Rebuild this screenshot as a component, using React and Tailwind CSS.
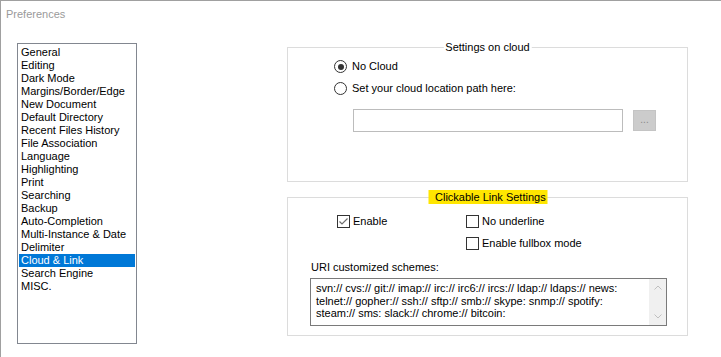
const pages = [
  'General',
  'Editing',
  'Dark Mode',
  'Margins/Border/Edge',
  'New Document',
  'Default Directory',
  'Recent Files History',
  'File Association',
  'Language',
  'Highlighting',
  'Print',
  'Searching',
  'Backup',
  'Auto-Completion',
  'Multi-Instance & Date',
  'Delimiter',
  'Cloud & Link',
  'Search Engine',
  'MISC.',
];

const schemes = [
  'svn:// cvs:// git:// imap:// irc:// irc6:// ircs:// ldap:// ldaps:// news:',
  'telnet:// gopher:// ssh:// sftp:// smb:// skype: snmp:// spotify:',
  'steam:// sms: slack:// chrome:// bitcoin:',
];

function Radio({ checked, label, className = '' }) {
  return (
    <div className={`flex items-center h-[13px] ${className}`}>
      <div className="w-[13px] h-[13px] rounded-full border border-[#333] flex items-center justify-center bg-white">
        {checked && <div className="w-[6px] h-[6px] rounded-full bg-[#333]" />}
      </div>
      <span className="ml-[5px] leading-[13px]">{label}</span>
    </div>
  );
}

function Check({ checked, label, className = '' }) {
  return (
    <div className={`flex items-center h-[13px] ${className}`}>
      <div className="w-[13px] h-[13px] border border-[#333] bg-white flex items-center justify-center">
        {checked && (
          <svg width="11" height="11" viewBox="0 0 11 11">
            <path d="M1.5 5.5 L4 8 L9.5 2.5" fill="none" stroke="#6e6e6e" strokeWidth="1.2" />
          </svg>
        )}
      </div>
      <span className="ml-[3px] leading-[13px]">{label}</span>
    </div>
  );
}

function Group({ title, titleClass = '', className = '', children }) {
  return (
    <div className={`relative w-[401px] border border-[#dcdcdc] ${className}`}>
      <span
        className={`absolute top-[-8px] left-1/2 -translate-x-1/2 h-[14px] leading-[14px] whitespace-nowrap ${titleClass}`}
      >
        {title}
      </span>
      {children}
    </div>
  );
}

export default function App() {
  return (
    <div className="w-[721px] h-[357px] bg-white border-t border-l border-[#a0a0a0] overflow-hidden font-['Liberation_Sans',Arial,sans-serif] text-[11px] text-black">
      <div className="h-[42px] pl-[5px] pt-[7px] leading-[13px] text-[#9a9a9a]">Preferences</div>

      <div className="flex pl-[16px]">
        <div className="w-[120px] h-[301px] border border-[#828790] px-[1px] pt-[2px]">
          {pages.map((p) => (
            <div
              key={p}
              className={`h-[13px] leading-[13px] pl-[2px] whitespace-nowrap ${
                p === 'Cloud & Link' ? 'bg-[#0078d7] text-white' : ''
              }`}
            >
              {p}
            </div>
          ))}
        </div>

        <div className="ml-[150px] mt-[4px] flex flex-col">
          <Group title="Settings on cloud" titleClass="bg-white px-[2px]" className="h-[135px]">
            <div className="pt-[12px] pl-[46px]">
              <Radio checked label="No Cloud" />
              <Radio label="Set your cloud location path here:" className="mt-[9px]" />
              <div className="flex mt-[14px] ml-[19px]">
                <div className="w-[270px] h-[23px] border border-[#bcbcbc] bg-white" />
                <div className="ml-[10px] mt-[1px] w-[23px] h-[21px] bg-[#cccccc] border border-[#c4c4c4] flex items-center justify-center text-[#8a8a8a] text-[10px] leading-none pb-[2px]">
                  ...
                </div>
              </div>
            </div>
          </Group>

          <Group
            title="Clickable Link Settings"
            titleClass="bg-[#ffe600] px-[7px] w-[119px]"
            className="h-[139px] mt-[15px]"
          >
            <div className="pt-[17px] pl-[49px] flex">
              <div className="w-[129px]">
                <Check checked label="Enable" />
              </div>
              <div className="flex flex-col">
                <Check label="No underline" />
                <Check label="Enable fullbox mode" className="mt-[9px]" />
              </div>
            </div>
            <div className="pl-[23px] mt-[11px] leading-[13px]">URI customized schemes:</div>
            <div className="ml-[22px] mt-[4px] w-[357px] h-[48px] border border-[#7a7a7a] bg-white flex">
              <div className="flex-1 pl-[5px] pt-[3px] leading-[12.5px] whitespace-nowrap overflow-hidden">
                {schemes.map((s) => (
                  <div key={s}>{s}</div>
                ))}
              </div>
              <div className="w-[17px] bg-[#f0f0f0] flex flex-col items-center justify-between py-[6px]">
                <svg width="8" height="5" viewBox="0 0 8 5">
                  <path d="M0.5 4.5 L4 1 L7.5 4.5" fill="none" stroke="#c0c0c0" strokeWidth="1" />
                </svg>
                <svg width="8" height="5" viewBox="0 0 8 5">
                  <path d="M0.5 0.5 L4 4 L7.5 0.5" fill="none" stroke="#c0c0c0" strokeWidth="1" />
                </svg>
              </div>
            </div>
          </Group>
        </div>
      </div>
    </div>
  );
}
